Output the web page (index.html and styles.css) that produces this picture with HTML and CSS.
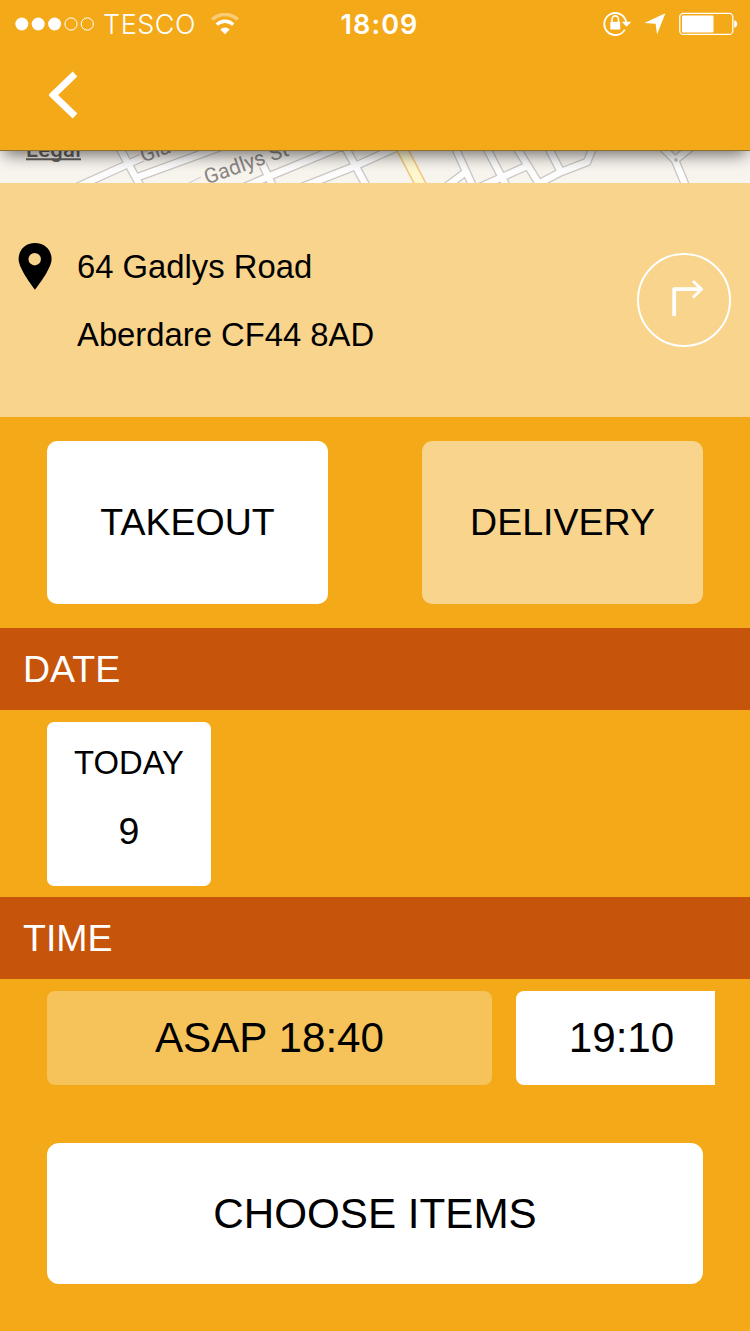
FILE: index.html
```html
<!DOCTYPE html>
<html lang="en">
<head>
<meta charset="utf-8">
<title>Order time</title>
<link rel="stylesheet" href="styles.css">
</head>
<body>
<div class="app">
  <header class="header">
    <div class="status">
      <div class="status-left">
        <svg class="signal" width="80" height="14" viewBox="0 0 80 14">
          <g fill="#fff"><circle cx="6.8" cy="7" r="6.5"/><circle cx="23.2" cy="7" r="6.5"/><circle cx="39.6" cy="7" r="6.5"/></g>
          <g fill="none" stroke="#fff" stroke-width="1"><circle cx="56" cy="7" r="6.1"/><circle cx="72.3" cy="7" r="6.1"/></g>
        </svg>
        <span class="carrier">TESCO</span>
        <svg class="wifi" width="28" height="22" viewBox="0 0 28 22" fill="none">
          <path d="M1.2 6.6A18.5 18.5 0 0 1 26.8 6.6" stroke="#fff" stroke-opacity=".4" stroke-width="3.4"/>
          <path d="M5.8 11.6A11.6 11.6 0 0 1 22.2 11.6" stroke="#fff" stroke-width="3.4"/>
          <path d="M14 21.2 9.3 16.4A6.7 6.7 0 0 1 18.7 16.4Z" fill="#fff"/>
        </svg>
      </div>
      <span class="clock">18:09</span>
      <div class="status-right">
        <svg width="28" height="26" viewBox="0 0 28 26" fill="none">
          <path d="M21.8 18.6A11 11 0 1 1 23.1 11" stroke="#fff" stroke-width="1.8"/>
          <path d="M18.8 10.8h9.4l-4.7 5z" fill="#fff"/>
          <path d="M7.3 10.9h9.9v7.6H7.3z" fill="#fff"/>
          <path d="M9 11.5V8.5a3.2 3.6 0 0 1 6.5 0V11.5" stroke="#fff" stroke-width="1.6"/>
        </svg>
        <svg class="locate" width="22" height="22" viewBox="0 0 22 22"><path d="M21.4.3 13 21.4 11.6 10.8.2 10Z" fill="#fff"/></svg>
        <svg class="battery" width="59" height="24" viewBox="0 0 59 24">
          <rect x=".8" y="1.4" width="53" height="21" rx="3.5" fill="none" stroke="#fff" stroke-width="1.3"/>
          <rect x="3" y="3.6" width="31.5" height="16.8" rx="1" fill="#fff"/>
          <path d="M55.2 8.3C59.3 9 59.3 15 55.2 15.8Z" fill="#fff"/>
        </svg>
      </div>
    </div>
    <svg class="back" width="30" height="48" viewBox="0 0 30 48"><path d="M26 3 4.2 24 26 45" fill="none" stroke="#fff" stroke-width="6.8"/></svg>
  </header>

  <div class="map">
    <svg width="750" height="33" viewBox="0 0 750 33">
      <defs>
        <g id="roads" fill="none">
          <path d="M75 37 128 13 170-6M118-6 142 38M138 26 223-5M240 38 270 25 345-6M262 12 274 38M297 38 353 16 402-6M344-6 368 38"/>
          <path d="M454-6 474 38M446 36 467 20M485-6 508 38M478 37 527 15M515-6 541 36M536 34 561 21 587 11 594-6M547-6 561 21M660-6 675 9 694-6M675 9 687 38"/>
        </g>
      </defs>
      <use href="#roads" stroke="#cbc7c5" stroke-width="9"/>
      <use href="#roads" stroke="#fffefe" stroke-width="6.4"/>
      <path d="M185 34 201 26" stroke="#cbc7c5"/>
      <path d="M400-6 423 38" stroke="#f4c57e" stroke-width="12"/>
      <path d="M400-6 423 38" stroke="#fff8cf" stroke-width="9"/>
      <circle cx="676" cy="9" r="2" fill="#cbc7c5"/>
      <g class="street">
        <text transform="translate(207 33.5) rotate(-19.5)">Gadlys St</text>
        <text transform="translate(143 11.5) rotate(-19.5)">Gla</text>
      </g>
      <text class="legal" x="26" y="5.5">Legal</text>
      <path d="M26 8.3H81" stroke="#656160" stroke-width="2"/>
    </svg>
  </div>

  <section class="address">
    <svg class="pin" width="34" height="47" viewBox="0 0 34 47"><path fill="#000" fill-rule="evenodd" d="M17 0C7.2 0 .6 7 .6 16.3.6 26 17 46.7 17 46.7S33.6 26 33.6 16.3C33.6 7 26.8 0 17 0Zm-.3 10a6.2 6.2 0 1 1 0 12.4 6.2 6.2 0 0 1 0-12.4Z"/></svg>
    <div class="lines"><div>64 Gadlys Road</div><div>Aberdare CF44 8AD</div></div>
    <svg class="directions" width="94" height="94" viewBox="0 0 94 94" fill="none" stroke="#fff">
      <circle cx="47" cy="47" r="46" stroke-width="2"/>
      <path d="M37.2 63V36.2H65" stroke-width="3.8" stroke-linejoin="round"/>
      <path d="M56 28 64.5 36.2 56 44.6" stroke-width="2.8"/>
    </svg>
  </section>

  <section class="modes">
    <div class="mode selected">TAKEOUT</div>
    <div class="mode">DELIVERY</div>
  </section>

  <h2 class="bar">DATE</h2>
  <section class="dates">
    <div class="day"><span class="day-name">TODAY</span><span class="day-number">9</span></div>
  </section>

  <h2 class="bar">TIME</h2>
  <section class="times">
    <div class="slot asap">ASAP 18:40</div>
    <div class="slot next">19:10</div>
  </section>

  <div class="choose">CHOOSE ITEMS</div>
</div>
</body>
</html>
```

FILE: styles.css
```css
* { box-sizing: border-box; }
body { margin: 0; }
.app {
  width: 750px;
  height: 1331px;
  overflow: hidden;
  background: #f4a919;
  color: #000;
  font-family: "Liberation Sans", Arial, sans-serif;
}
svg { display: block; flex: none; }

.header {
  position: relative;
  z-index: 1;
  height: 151px;
  background: #f4a919;
  border-bottom: 1px solid #90702f;
  box-shadow: 0 7px 16px -4px rgba(0, 0, 0, .6);
}
.status {
  display: grid;
  grid-template-columns: 1fr auto 1fr;
  align-items: center;
  height: 48px;
  padding: 0 12px 0 15px;
  color: #fff;
  font-family: Inter, sans-serif;
  font-size: 27px;
}
.status-left, .status-right { display: flex; align-items: center; }
.status-right { justify-content: flex-end; }
.carrier { width: 94px; margin-left: 8px; font-weight: 350; letter-spacing: .5px; }
.wifi { margin-left: 14px; }
.clock { padding-left: 6px; font-weight: 600; letter-spacing: 1.1px; }
.locate { margin-left: 13px; }
.battery { margin-left: 13px; }
.back { margin: 23px 0 0 49px; }

.map { height: 32px; background: #f8f4ee; overflow: hidden; }
.street text {
  font: 21px Roboto, sans-serif;
  fill: #8b8786;
  stroke: #f8f4ee;
  stroke-width: 3px;
  paint-order: stroke;
}
.legal { font: 500 22px Roboto, sans-serif; letter-spacing: .3px; fill: #656160; }

.address {
  display: flex;
  align-items: flex-start;
  height: 234px;
  padding-left: 18px;
  background: #f9d48c;
}
.pin { margin-top: 60px; }
.lines { flex: 1; margin: 50px 0 0 25px; font-size: 32.8px; line-height: 68px; }
.directions { margin: 70px 19px 0 0; }

.modes { display: flex; justify-content: space-between; height: 211px; padding: 24px 47px; }
.mode {
  display: flex;
  align-items: center;
  justify-content: center;
  width: 281px;
  border-radius: 10px;
  background: #f9d48c;
  font-size: 37.5px;
}
.mode.selected { background: #fff; }

.bar {
  height: 82px;
  margin: 0;
  padding-left: 23px;
  background: #c6540b;
  color: #fff;
  font-size: 37.5px;
  font-weight: 400;
  line-height: 82px;
}
.dates { height: 187px; padding: 12px 47px; }
.day {
  display: flex;
  flex-direction: column;
  align-items: center;
  width: 164px;
  height: 164px;
  padding-top: 7px;
  border-radius: 7px;
  background: #fff;
  line-height: 68px;
}
.day-name { font-size: 32.8px; }
.day-number { font-size: 37.5px; }

.times { display: flex; gap: 24px; padding: 12px 35px 0 47px; }
.slot {
  height: 94px;
  border-radius: 8px;
  font-size: 42.2px;
  line-height: 94px;
  text-align: center;
}
.asap { width: 445px; background: #f6c35a; }
.next { flex: 1; padding-left: 12px; border-radius: 8px 0 0 8px; background: #fff; }

.choose {
  height: 141px;
  margin: 58px 47px 0;
  border-radius: 12px;
  background: #fff;
  font-size: 42.2px;
  line-height: 141px;
  text-align: center;
}
```
